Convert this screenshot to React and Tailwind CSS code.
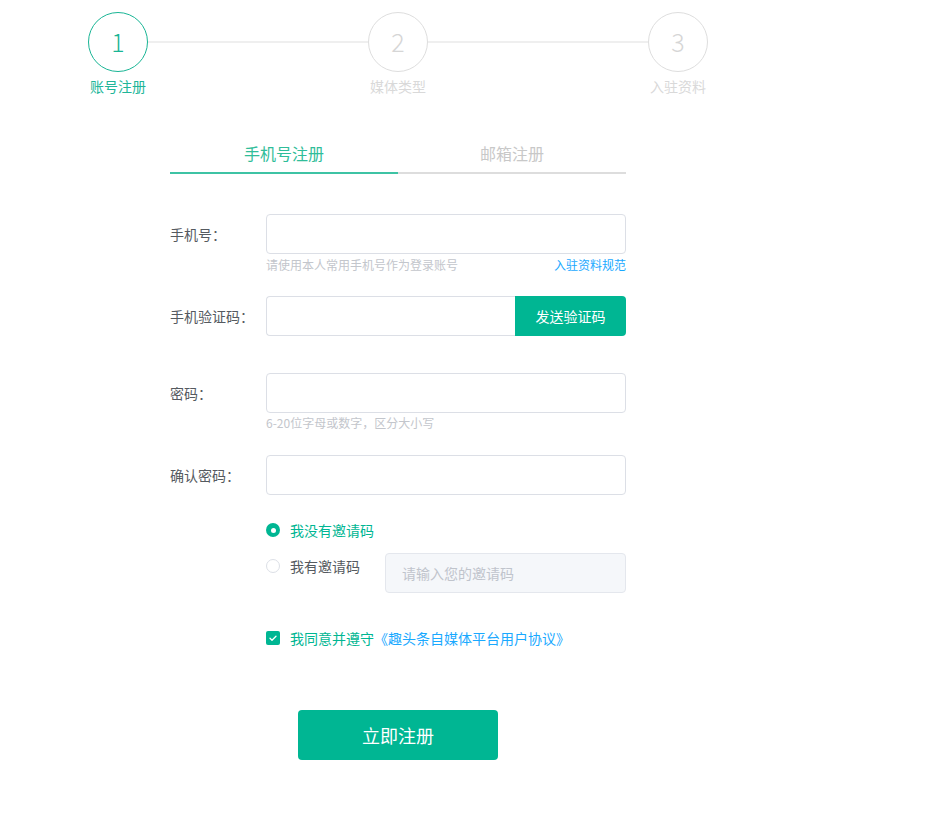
import React, { useState } from "react";

const font = { fontFamily: '"Noto Sans CJK SC", "Noto Sans", sans-serif' };

const steps = [
  { n: "1", label: "账号注册", active: true },
  { n: "2", label: "媒体类型" },
  { n: "3", label: "入驻资料" },
];

const Step = ({ step }) => (
  <div className="flex flex-col items-center w-[60px] shrink-0">
    <div
      className={`w-[60px] h-[60px] rounded-full border flex items-center justify-center text-[25px] font-light ${
        step.active
          ? "border-[#19b595] text-[#19b595]"
          : "border-[#dedede] text-[#d6d6d6]"
      }`}
    >
      {step.n}
    </div>
    <p
      className={`mt-[4px] text-[14px] leading-[20px] whitespace-nowrap ${
        step.active ? "text-[#20b598]" : "text-[#d9d9d9]"
      }`}
    >
      {step.label}
    </p>
  </div>
);

export default function App() {
  const [tab, setTab] = useState(0);
  const [invite, setInvite] = useState(false);
  const [agree, setAgree] = useState(true);

  return (
    <div className="min-h-screen bg-white text-[14px]" style={font}>
      {/* Steps */}
      <div className="ml-[88px] w-[620px] pt-[12px] flex items-start">
        <Step step={steps[0]} />
        <div className="flex-1 h-[2px] mt-[29px] bg-[#efefef]" />
        <Step step={steps[1]} />
        <div className="flex-1 h-[2px] mt-[29px] bg-[#efefef]" />
        <Step step={steps[2]} />
      </div>

      <div className="ml-[170px] w-[456px]">
        {/* Tabs */}
        <div className="mt-[45px] flex">
          {["手机号注册", "邮箱注册"].map((t, i) => (
            <button
              key={t}
              onClick={() => setTab(i)}
              className={`flex-1 text-[16px] leading-[24px] pb-[7px] border-b-2 ${
                tab === i
                  ? "text-[#30bd99] border-[#3ec3a4]"
                  : "text-[#c8c8c8] border-[#dddddd]"
              }`}
            >
              {t}
            </button>
          ))}
        </div>

        {/* Phone */}
        <div className="mt-[40px] flex items-center">
          <label className="w-[96px] text-[#555a60]">手机号：</label>
          <input className="flex-1 h-[40px] border border-[#dcdfe6] rounded-[4px] px-[12px] outline-none" />
        </div>
        <div className="ml-[96px] mt-[2px] flex justify-between text-[12px] leading-[18px]">
          <span className="text-[#c3c6cc]">请使用本人常用手机号作为登录账号</span>
          <a className="text-[#1aa9ff] cursor-pointer">入驻资料规范</a>
        </div>

        {/* Code */}
        <div className="mt-[22px] flex items-center">
          <label className="w-[96px] text-[#555a60]">手机验证码：</label>
          <div className="flex-1 flex h-[40px]">
            <input className="flex-1 min-w-0 border border-[#dcdfe6] border-r-0 rounded-l-[4px] px-[12px] outline-none" />
            <button className="w-[111px] bg-[#00b693] text-white rounded-r-[4px]">
              发送验证码
            </button>
          </div>
        </div>

        {/* Password */}
        <div className="mt-[37px] flex items-center">
          <label className="w-[96px] text-[#555a60]">密码：</label>
          <input
            type="password"
            className="flex-1 h-[40px] border border-[#dcdfe6] rounded-[4px] px-[12px] outline-none"
          />
        </div>
        <div className="ml-[96px] mt-[1px] text-[12px] leading-[18px] text-[#c3c6cc]">
          6-20位字母或数字，区分大小写
        </div>

        {/* Confirm */}
        <div className="mt-[23px] flex items-center">
          <label className="w-[96px] text-[#555a60]">确认密码：</label>
          <input
            type="password"
            className="flex-1 h-[40px] border border-[#dcdfe6] rounded-[4px] px-[12px] outline-none"
          />
        </div>

        {/* Invite */}
        <div className="ml-[96px] mt-[25px]">
          <div
            className="flex items-center leading-[20px] cursor-pointer"
            onClick={() => setInvite(false)}
          >
            <span
              className={`w-[14px] h-[14px] rounded-full flex items-center justify-center ${
                !invite ? "bg-[#00b693]" : "border border-[#dcdfe6]"
              }`}
            >
              {!invite && <span className="w-[5px] h-[5px] rounded-full bg-white" />}
            </span>
            <span className={`ml-[10px] ${!invite ? "text-[#00b693]" : "text-[#555a60]"}`}>
              我没有邀请码
            </span>
          </div>
          <div className="mt-[13px] flex items-start">
            <div
              className="mt-[3px] flex items-center leading-[20px] cursor-pointer w-[119px]"
              onClick={() => setInvite(true)}
            >
              <span
                className={`w-[14px] h-[14px] rounded-full flex items-center justify-center ${
                  invite ? "bg-[#00b693]" : "border border-[#dcdfe6]"
                }`}
              >
                {invite && <span className="w-[5px] h-[5px] rounded-full bg-white" />}
              </span>
              <span className={`ml-[10px] ${invite ? "text-[#00b693]" : "text-[#555a60]"}`}>
                我有邀请码
              </span>
            </div>
            <input
              placeholder="请输入您的邀请码"
              disabled={!invite}
              className="w-[241px] h-[40px] bg-[#f5f7fa] border border-[#e4e7ed] rounded-[4px] px-[16px] outline-none placeholder:text-[#c0c4cc]"
            />
          </div>
        </div>

        {/* Agreement */}
        <div
          className="ml-[96px] mt-[35px] flex items-center leading-[20px] cursor-pointer"
          onClick={() => setAgree(!agree)}
        >
          <span
            className={`w-[14px] h-[14px] rounded-[2px] flex items-center justify-center ${
              agree ? "bg-[#00b693]" : "border border-[#dcdfe6]"
            }`}
          >
            {agree && (
              <svg width="10" height="10" viewBox="0 0 10 10" fill="none">
                <path d="M2 5.2l2 2L8 3.2" stroke="white" strokeWidth="1.3" strokeLinecap="round" strokeLinejoin="round" />
              </svg>
            )}
          </span>
          <span className="ml-[10px] text-[#00b693]">我同意并遵守</span>
          <span className="text-[#1aa9ff]">《趣头条自媒体平台用户协议》</span>
        </div>

        {/* Submit */}
        <button className="ml-[128px] mt-[62px] w-[200px] h-[50px] rounded-[4px] bg-[#00b693] text-white text-[18px]">
          立即注册
        </button>
      </div>
    </div>
  );
}
